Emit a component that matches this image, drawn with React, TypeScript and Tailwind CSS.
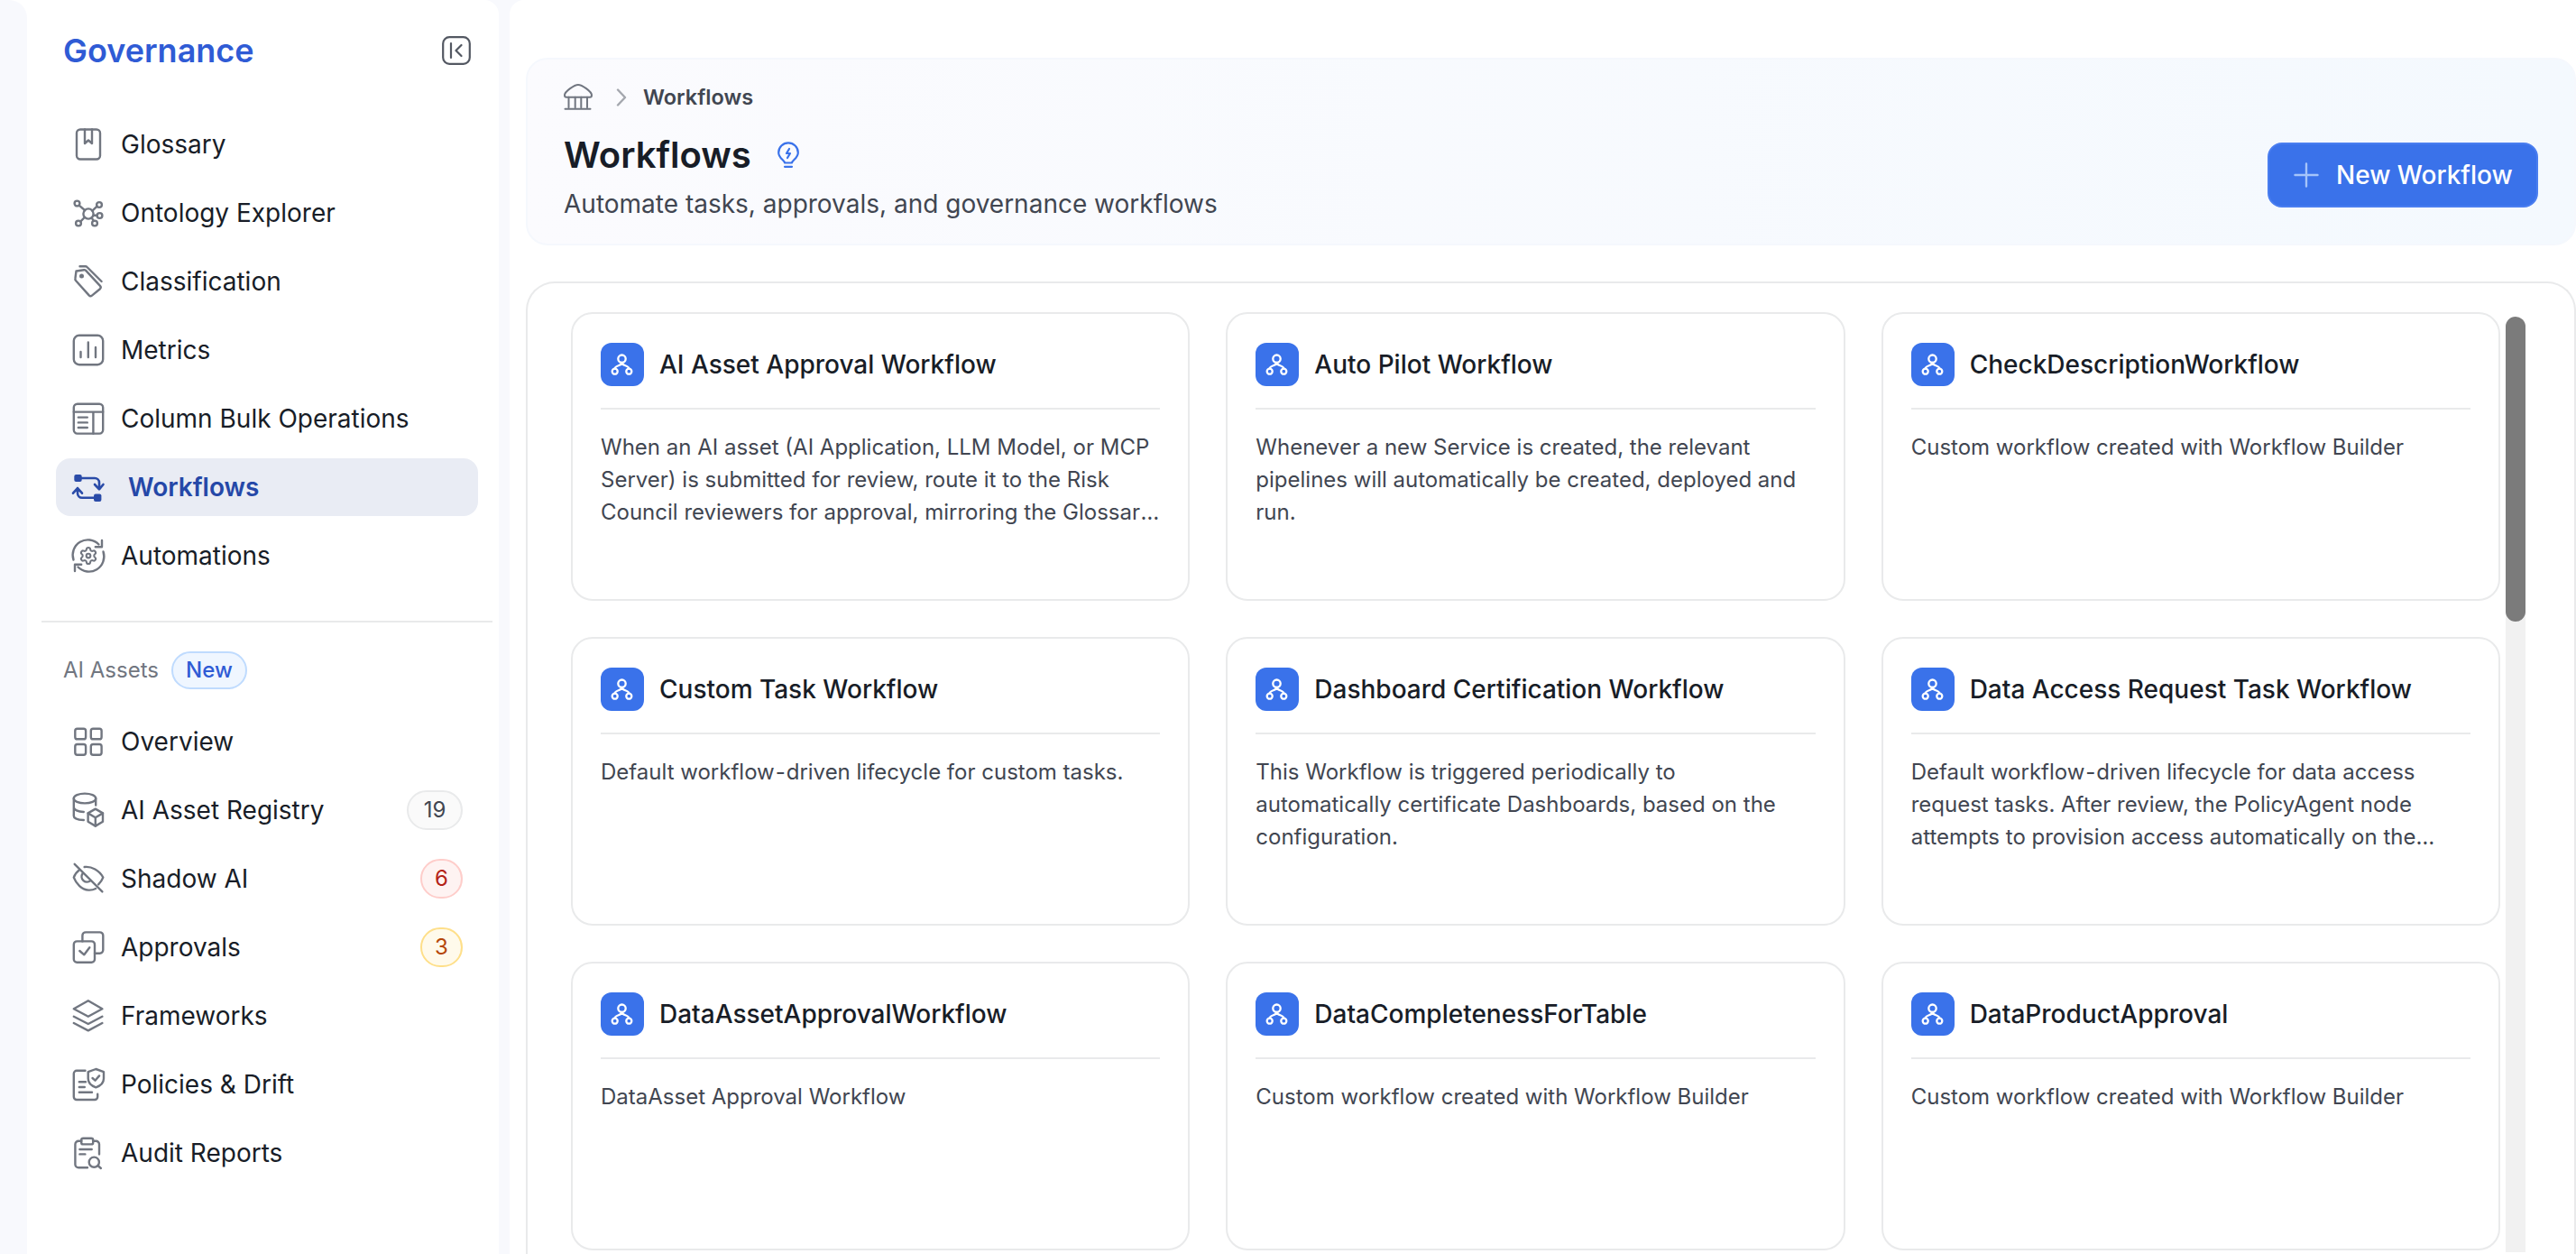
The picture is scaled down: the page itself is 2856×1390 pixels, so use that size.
import React from "react";

const S = ({ children, color = "#717680", w = 2.4 }: { children: React.ReactNode; color?: string; w?: number }) => (
  <svg width="40" height="40" viewBox="0 0 40 40" fill="none" stroke={color} strokeWidth={w} strokeLinecap="round" strokeLinejoin="round" className="shrink-0">
    {children}
  </svg>
);

const icons: Record<string, React.ReactNode> = {
  Glossary: (
    <S>
      <rect x="7" y="3.5" width="26" height="33" rx="4" />
      <path d="M16 3.5V19l4-3.5 4 3.5V3.5" />
    </S>
  ),
  "Ontology Explorer": (
    <S>
      <circle cx="20" cy="21" r="5.6" />
      <circle cx="7.5" cy="9.5" r="2.9" />
      <circle cx="32" cy="11" r="2.9" />
      <circle cx="32.5" cy="23" r="2.9" />
      <circle cx="9" cy="31.5" r="2.9" />
      <circle cx="27" cy="31.5" r="2.9" />
      <path d="M9.7 11.7 16 17M29.6 12.6 24.4 17.6M29.6 22.7h-4M11.2 29.6 15.7 25M25.8 28.8 23.8 25.6" />
    </S>
  ),
  Classification: (
    <S>
      <path d="M6.5 8.5 15 7.2a2.5 2.5 0 0 1 2.2.7l15.8 17a2.4 2.4 0 0 1-.1 3.3l-9 7.4a2.4 2.4 0 0 1-3.2-.2L6 19a2.5 2.5 0 0 1-.6-2.1l1.1-8.4Z" />
      <path d="M10.5 3.2h6.2a2.5 2.5 0 0 1 1.8.8L34.6 20" />
      <circle cx="12.5" cy="14" r="1.3" />
    </S>
  ),
  Metrics: (
    <S>
      <rect x="3.8" y="3.8" width="32.4" height="32.4" rx="6" />
      <path d="M11.5 22v6M19.8 11.5V28M28 17v11" />
    </S>
  ),
  "Column Bulk Operations": (
    <S>
      <rect x="3.8" y="3.8" width="32.4" height="32.8" rx="4" />
      <path d="M3.8 12.6h32.4M25.4 12.6v24M8.8 18.6h10M8.8 24.4h10M8.8 30h10" />
    </S>
  ),
  Workflows: (
    <svg width="40" height="40" viewBox="0 0 40 40" fill="none" stroke="#2a4ba8" strokeWidth="2.6" strokeLinecap="round" strokeLinejoin="round" className="shrink-0">
      <rect x="4.3" y="6" width="8.4" height="8" rx="2" fill="#2a4ba8" stroke="none" />
      <rect x="26" y="27.5" width="8.4" height="8.5" rx="2" fill="#2a4ba8" stroke="none" />
      <path d="M12.7 10H27a5 5 0 0 1 5 5v7M27 17l5 5.4 4.5-5.4" />
      <path d="M26 31.7H13a5 5 0 0 1-5-5V21M3 26.7l5-5.6 5 5.6" />
    </svg>
  ),
  Automations: (
    <S>
      <path d="M3.500 24.500A16.800 16.800 0 0 1 31.500 7.500M36.500 15.500A16.800 16.800 0 0 1 8.500 32.500" />
      <path d="M35 3v7.200h-7.200M5 37v-7.200h7.200" />
      <g transform="translate(9.200 9.200) scale(.9)" strokeWidth="2.300">
        <path d="M9.671 4.136a2.34 2.34 0 0 1 4.659 0 2.34 2.34 0 0 0 3.319 1.915 2.34 2.34 0 0 1 2.33 4.033 2.34 2.34 0 0 0 0 3.831 2.34 2.34 0 0 1-2.33 4.033 2.34 2.34 0 0 0-3.319 1.915 2.34 2.34 0 0 1-4.659 0 2.34 2.34 0 0 0-3.32-1.915 2.34 2.34 0 0 1-2.33-4.033 2.34 2.34 0 0 0 0-3.831A2.34 2.34 0 0 1 6.35 6.051a2.34 2.34 0 0 0 3.319-1.915" />
        <circle cx="12" cy="12" r="2.600" />
      </g>
    </S>
  ),
  Overview: (
    <S>
      <rect x="5.3" y="5.7" width="11.8" height="11.6" rx="2.4" />
      <rect x="22.8" y="5.7" width="11.8" height="11.6" rx="2.4" />
      <rect x="5.3" y="23" width="11.8" height="11.7" rx="2.4" />
      <rect x="22.8" y="23" width="11.8" height="11.7" rx="2.4" />
    </S>
  ),
  "AI Asset Registry": (
    <S>
      <ellipse cx="16" cy="7" rx="12.2" ry="5.4" />
      <path d="M3.8 7v19.5c0 2.4 4 4.3 11 4.5M3.8 16.8c0 2.7 4.6 5 11 5.2M28.2 7v7.5" />
      <path d="m27.8 18.6 8.2 4.8v9.4l-8.2 4.8-8.2-4.8v-9.4Z" />
      <path d="m19.6 23.4 8.2 4.8 8.2-4.8M27.8 28.2v9.4" />
    </S>
  ),
  "Shadow AI": (
    <S>
      <path d="M4.7 3.8 35.4 34.4" />
      <path d="M10 10.2C6.8 12.6 4.8 15.7 3.8 18.6c2.7 7 8.8 13.5 16.3 14 2.9.2 5.6-.4 8-1.6M15.6 7c7.8-1 16.6 3.8 20.7 11.6-1.2 3-3 5.7-5.2 7.8" />
      <path d="M13.6 14.2a6 6 0 0 0 8.8 8" />
    </S>
  ),
  Approvals: (
    <S>
      <rect x="3.8" y="13.4" width="23.2" height="23.3" rx="3.5" />
      <path d="M13.4 13.4V7a3.6 3.6 0 0 1 3.6-3.6h15.7a3.6 3.6 0 0 1 3.6 3.6v16.1a3.6 3.6 0 0 1-3.6 3.6H27" />
      <path d="m10.3 24 5 4.3 6-8" />
    </S>
  ),
  Frameworks: (
    <S>
      <path d="M19.8 3.3 35.4 12.3 19.8 20.8 3.8 12.3Z" />
      <path d="M3.8 20.7 19.8 29l15.6-8.3M3.8 28 19.8 36.4 35.4 28" />
    </S>
  ),
  "Policies & Drift": (
    <S>
      <path d="M16.5 4.8H7a3.2 3.2 0 0 0-3.2 3.2v25.8A3.2 3.2 0 0 0 7 37h20a3.2 3.2 0 0 0 3.2-3.2v-3" />
      <path d="M9.8 17.3h7.2M9.8 23h6M9.8 28.8H24" />
      <path d="M28.3 3 37 6.2v7.3c0 4.3-3.4 8-8.7 9.8-5.2-1.8-8.6-5.5-8.6-9.8V6.2Z" />
      <path d="m24.5 13 3 2.7 4.6-5.3" />
    </S>
  ),
  "Audit Reports": (
    <S>
      <path d="M12.3 6.8H9a3.6 3.6 0 0 0-3.6 3.6V32.7A3.6 3.6 0 0 0 9 36.3h10M25 6.8h3.4a3.6 3.6 0 0 1 3.6 3.6v11" />
      <rect x="12.2" y="3.7" width="13" height="6.7" rx="2" />
      <path d="M10.4 16h13.3M10.4 21.4h6" />
      <circle cx="26.3" cy="30.2" r="5.6" />
      <path d="m30.5 34 3.4 3" />
    </S>
  ),
};

const top = ["Glossary", "Ontology Explorer", "Classification", "Metrics", "Column Bulk Operations", "Workflows", "Automations"];
const bottom: { name: string; badge?: string; cls?: string }[] = [
  { name: "Overview" },
  { name: "AI Asset Registry", badge: "19", cls: "w-[62px] bg-[#fafafa] border-[#e9eaeb] text-[#414651]" },
  { name: "Shadow AI", badge: "6", cls: "w-[47px] bg-[#fef3f2] border-[#fecdca] text-[#b42318]" },
  { name: "Approvals", badge: "3", cls: "w-[47px] bg-[#fffaeb] border-[#fedf89] text-[#b54708]" },
  { name: "Frameworks" },
  { name: "Policies & Drift" },
  { name: "Audit Reports" },
];

const cards = [
  ["AI Asset Approval Workflow", "When an AI asset (AI Application, LLM Model, or MCP Server) is submitted for review, route it to the Risk Council reviewers for approval, mirroring the Glossary Term approval workflow for governance."],
  ["Auto Pilot Workflow", "Whenever a new Service is created, the relevant pipelines will automatically be created, deployed and run."],
  ["CheckDescriptionWorkflow", "Custom workflow created with Workflow Builder"],
  ["Custom Task Workflow", "Default workflow\u200A\u2011\u200Adriven lifecycle for custom tasks."],
  ["Dashboard Certification Workflow", "This Workflow is triggered periodically to automatically certificate Dashboards, based on the configuration."],
  ["Data Access Request Task Workflow", "Default workflow\u200A\u2011\u200Adriven lifecycle for data access request tasks. After review, the PolicyAgent node attempts to provision access automatically on the underlying data source for the requester."],
  ["DataAssetApprovalWorkflow", "DataAsset Approval Workflow"],
  ["DataCompletenessForTable", "Custom workflow created with Workflow Builder"],
  ["DataProductApproval", "Custom workflow created with Workflow Builder"],
];

function Row({ name, badge, cls }: { name: string; badge?: string; cls?: string }) {
  const active = name === "Workflows";
  return (
    <div className={`flex items-center h-[64px] pl-[16px] pr-[17px] rounded-[16px] ${active ? "bg-[#e9ecf4]" : ""}`}>
      {icons[name]}
      <span className={`text-[28px] leading-[36px] ${active ? "ml-[24px] font-semibold text-[#2548a8]" : "ml-[16px] text-[#181d27]"}`}>{name}</span>
      {badge && (
        <span className={`ml-auto flex items-center justify-center h-[44px] rounded-full border-2 text-[24px] ${cls}`}>{badge}</span>
      )}
    </div>
  );
}

function Card({ title, text }: { title: string; text: string }) {
  return (
    <div className="h-[320px] rounded-[24px] border-2 border-[#e9eaeb] bg-white px-[31px] pt-[32px]">
      <div className="flex items-center gap-[17px] pb-[24px] border-b-2 border-[#e9eaeb]">
        <div className="flex items-center justify-center w-[48px] h-[48px] rounded-[12px] bg-[#3a72ea] shrink-0">
          <svg width="48" height="48" viewBox="0 0 48 48" fill="none" stroke="#fff" strokeWidth="2.3" strokeLinecap="round">
            <circle cx="23.5" cy="17.7" r="4.2" />
            <circle cx="15.7" cy="31.7" r="3" />
            <circle cx="31.3" cy="31.7" r="3" />
            <path d="M23.5 22c0 4-7.8 2.5-7.8 6.7M23.5 22c0 4 7.8 2.5 7.8 6.7" />
          </svg>
        </div>
        <span className="text-[28px] leading-[36px] font-medium text-[#181d27] whitespace-nowrap">{title}</span>
      </div>
      <p className="mt-[24px] mr-[-2px] text-[24px] leading-[36px] text-[#414651] line-clamp-3">{text}</p>
    </div>
  );
}

export default function App() {
  return (
    <div className="flex h-[1390px] w-full overflow-hidden bg-[#f8f9fd] [font-family:Inter,sans-serif]">
      <div className="w-[30px] shrink-0 bg-white">
        <div className="h-full rounded-tr-[20px] bg-[#f8f9fd]" />
      </div>
      <aside className="w-[523px] shrink-0 rounded-tr-[16px] bg-white">
        <div className="flex items-center justify-between h-[32px] mt-[40px] pl-[40px] pr-[31px]">
          <span className="text-[36px] leading-[44px] font-semibold text-[#2f5bd5]">Governance</span>
          <svg width="32" height="32" viewBox="0 0 32 32" fill="none" stroke="#535862" strokeWidth="2.2" strokeLinecap="round" strokeLinejoin="round">
            <rect x="1.2" y="1.2" width="29.6" height="29.6" rx="7" />
            <path d="M10 8v16M21.5 10 15.500 16l6 6" />
          </svg>
        </div>
        <nav className="flex flex-col gap-[12px] mt-[56px] ml-[32px] w-[468px]">
          {top.map((n) => (
            <Row key={n} name={n} />
          ))}
        </nav>
        <div className="h-[2px] w-[500px] ml-[16px] mt-[40px] bg-[#e9eaeb]" />
        <div className="flex items-center h-[42px] mt-[32px] pl-[40px] gap-[14px]">
          <span className="text-[24px] text-[#717680]">AI Assets</span>
          <span className="flex items-center justify-center w-[84px] h-[42px] rounded-full border-2 border-[#bfdbfe] bg-[#eff6ff] text-[24px] font-medium text-[#2f5bd5]">New</span>
        </div>
        <nav className="flex flex-col gap-[12px] mt-[26px] ml-[32px] w-[468px]">
          {bottom.map((r) => (
            <Row key={r.name} {...r} />
          ))}
        </nav>
      </aside>
      <main className="flex flex-col flex-1 min-w-0 ml-[12px] pl-[18px] pt-[64px] rounded-tl-[16px] bg-white">
        <section className="flex items-end justify-between h-[208px] pb-[26px] px-[40px] rounded-[24px] border-2 border-[#f5f8fd] bg-linear-to-r from-[#fbfbfe] to-[#f4f9fe]">
          <div>
            <div className="flex items-center h-[36px]">
              <svg width="32" height="32" viewBox="0 0 32 32" fill="none" stroke="#717680" strokeWidth="2" strokeLinecap="round" strokeLinejoin="round">
                <path d="M1 13.5C1 9 12 2 16 2s15 7 15 11.500c0 1.500-.7 2.200-2 2.200H3c-1.300 0-2-.7-2-2.200Z" />
                <path d="M5.500 15.700V27M12.700 15.700V27M19.300 15.700V27M26 15.700V27M1.500 28.800h28" />
              </svg>
              <svg width="12" height="20" viewBox="0 0 12 20" fill="none" stroke="#a4a7ae" strokeWidth="2.4" strokeLinecap="round" strokeLinejoin="round" className="ml-[26px]">
                <path d="m2 1.500 8 8.500-8 8.500" />
              </svg>
              <span className="ml-[18px] text-[23.5px] font-semibold text-[#414651]">Workflows</span>
            </div>
            <div className="flex items-center h-[48px] mt-[22px]">
              <span className="text-[40px] leading-[48px] font-semibold text-[#181d27]">Workflows</span>
              <svg width="24" height="30" viewBox="0 0 24 30" fill="none" stroke="#3a72ea" strokeWidth="2.200" strokeLinecap="round" strokeLinejoin="round" className="ml-[29px]">
                <path d="M8 23.500c0-3-6.800-5-6.800-11.300a10.800 10.800 0 0 1 21.600 0C22.800 18.500 16 20.500 16 23.500Z" />
                <path d="M8 27.800h8M13 8l-3 5h4l-3 5" />
              </svg>
            </div>
            <p className="mt-[12px] text-[28px] leading-[36px] text-[#414651]">Automate tasks, approvals, and governance workflows</p>
          </div>
          <button className="flex items-center w-[300px] h-[72px] mb-[14px] pl-[27px] rounded-[16px] border-2 border-[#4a7ef0] bg-[#3a72ea] text-[28px] font-medium text-white">
            <svg width="28" height="28" viewBox="0 0 28 28" fill="none" stroke="#a5c4fa" strokeWidth="2.400" strokeLinecap="round" className="shrink-0">
              <path d="M14 1.500v25M1.500 14h25" />
            </svg>
            <span className="ml-[19px]">New Workflow</span>
          </button>
        </section>
        <section className="flex flex-1 min-h-0 mt-[40px] rounded-t-[32px] border-2 border-b-0 border-[#e9eaeb] bg-white pl-[48px] pr-[54px] overflow-hidden">
          <div className="grid grid-cols-3 gap-[40px] w-[2139px] shrink-0 pt-[32px] content-start">
            {cards.map(([t, d]) => (
              <Card key={t} title={t} text={d} />
            ))}
          </div>
          <div className="w-[22px] shrink-0 ml-[6px] mt-[37px] mb-[2px] rounded-t-[11px] bg-[#f1f1f1]">
            <div className="h-[338px] rounded-[11px] bg-[#7b7b7b]" />
          </div>
        </section>
      </main>
    </div>
  );
}
